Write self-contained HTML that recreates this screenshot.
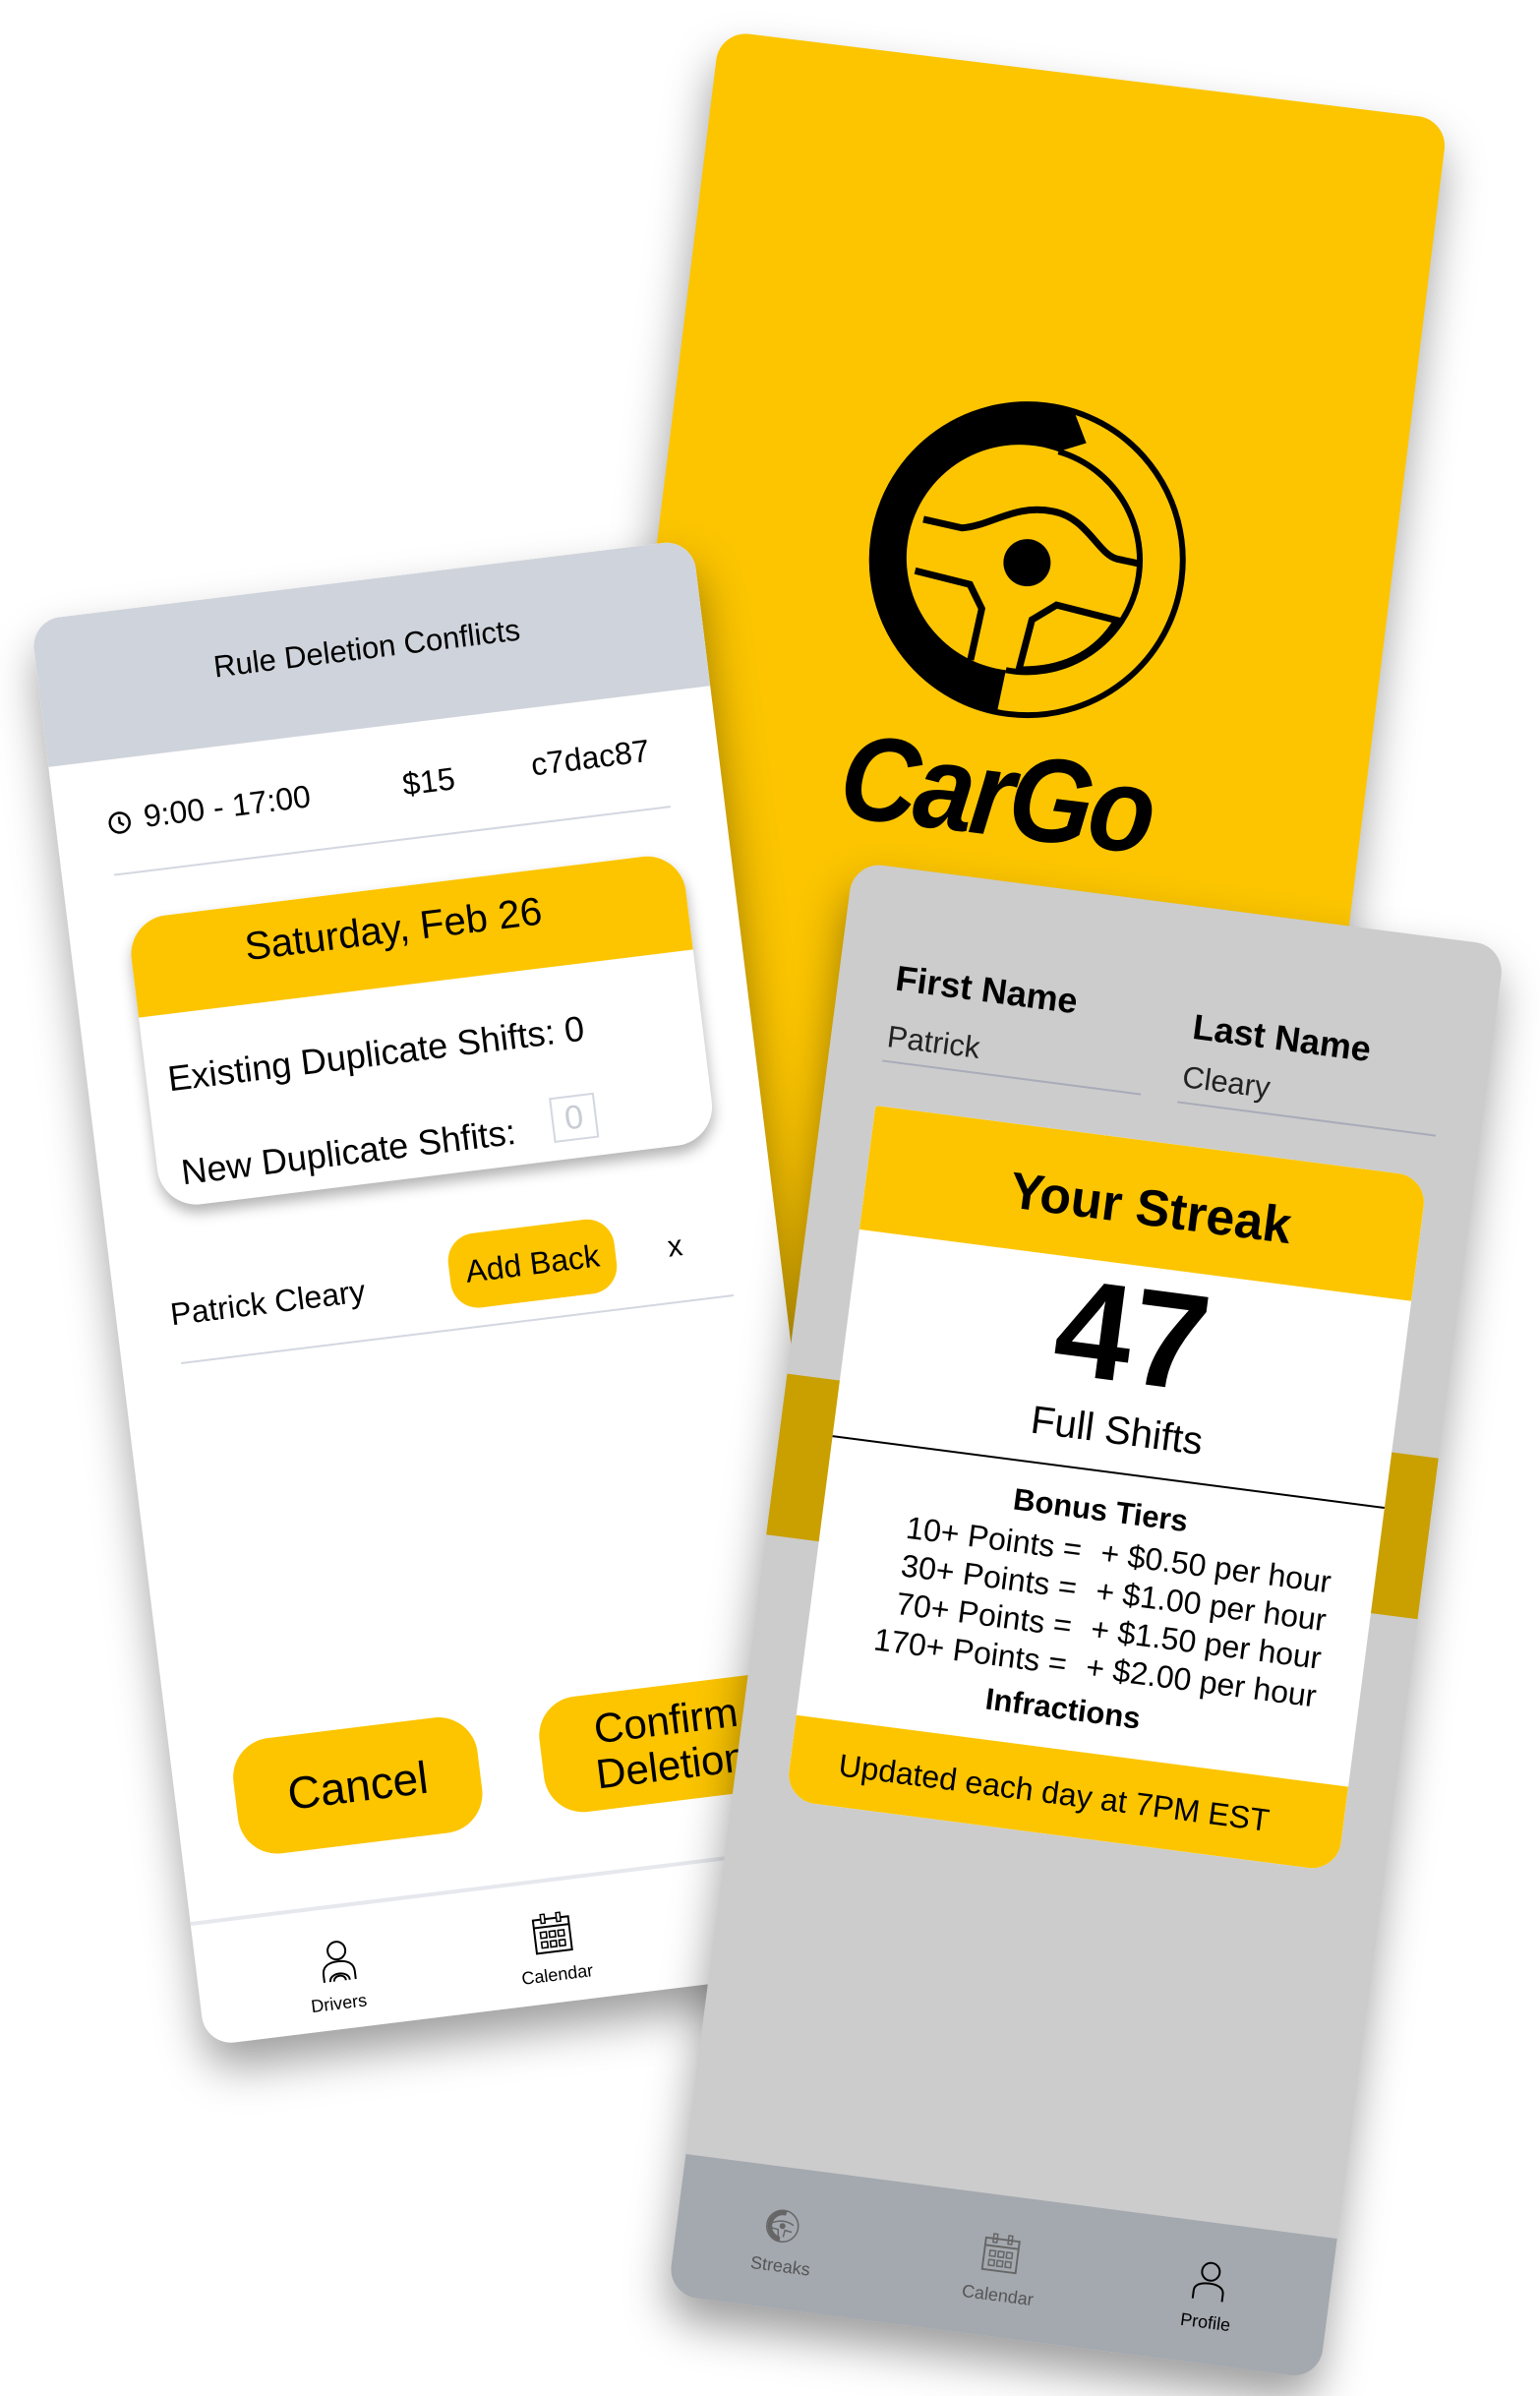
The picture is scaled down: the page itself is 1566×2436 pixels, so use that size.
<!DOCTYPE html>
<html><head><meta charset="utf-8">
<style>
*{margin:0;padding:0;box-sizing:border-box}
body{width:1566px;height:2436px;background:#fff;position:relative;overflow:hidden;font-family:"Liberation Sans",Arial,sans-serif;color:#000}
.card{position:absolute;transform-origin:0 0;overflow:hidden;border-radius:30px;box-shadow:0 25px 45px rgba(0,0,0,.38)}
.a{position:absolute;white-space:nowrap}
.c{transform:translate(-50%,-50%)}
.l{transform:translateY(-50%)}
.btn{position:absolute;background:#fcc500;border-radius:40px;display:flex;align-items:center;justify-content:center;text-align:center;transform:translate(-50%,-50%)}
</style></head><body>

<!-- Yellow splash card -->
<div class="card" style="left:732px;top:31px;width:746px;height:1460px;background:#fcc500;transform:rotate(7deg)">
  <svg class="a" style="left:206px;top:326px" width="340" height="340" viewBox="-170 -170 340 340">
    <circle cx="0" cy="0" r="158" fill="none" stroke="#000" stroke-width="6"/>
    <path d="M 28 -157 A 160 160 0 1 0 -12 160 L -8 114 A 115 115 0 1 1 18 -113 L 45 -125 Z" fill="#000"/>
    <path d="M 18 -113 A 115 115 0 0 1 113 18 A 115 115 0 0 1 -8 114" fill="none" stroke="#000" stroke-width="6"/>
    <path d="M -110 -28 L -70 -24 C -40 -30 -20 -55 20 -52 C 55 -50 70 -15 90 -12 L 112 -10" fill="none" stroke="#000" stroke-width="7"/>
    <path d="M -112 25 L -55 32 L -40 55 L -45 108" fill="none" stroke="#000" stroke-width="7"/>
    <path d="M 5 112 L 12 60 L 35 42 L 98 50 C 80 90 45 108 5 112" fill="none" stroke="#000" stroke-width="7"/>
    <circle cx="0" cy="3" r="24" fill="#000"/>
  </svg>
  <div class="a c" style="left:374px;top:736px;font-size:122px;font-weight:bold;font-style:italic;letter-spacing:-4px"><span style="display:inline-block;transform:scaleX(.9)">CarGo</span></div>
</div>

<!-- Left card -->
<div class="card" style="left:31px;top:631px;width:678px;height:1460px;background:#fff;transform:rotate(-7deg)">
  <div class="a" style="left:0;top:0;width:678px;height:150px;background:#cfd3db"></div>
  <div class="a c" style="left:336px;top:70px;font-size:31px">Rule Deletion Conflicts</div>
  <svg class="a" style="left:52px;top:202px" width="26" height="26" viewBox="0 0 26 26"><circle cx="13" cy="13" r="10" fill="none" stroke="#000" stroke-width="2.5"/><path d="M13 7 V13 L17 16" fill="none" stroke="#000" stroke-width="2.5"/></svg>
  <div class="a l" style="left:90px;top:212px;font-size:32px">9:00 - 17:00</div>
  <div class="a c" style="left:382px;top:212px;font-size:32px">$15</div>
  <div class="a c" style="left:548px;top:208px;font-size:32px">c7dac87</div>
  <div class="a" style="left:53px;top:266px;width:570px;height:2px;background:#d3d7e0"></div>

  <div class="a" style="left:60px;top:314px;width:568px;height:296px;border-radius:40px;background:#fff;box-shadow:0 8px 14px rgba(0,0,0,.3);overflow:hidden">
    <div style="height:100px;background:#fcc500"></div>
  </div>
  <div class="a c" style="left:328px;top:357px;font-size:40px">Saturday, Feb 26</div>
  <div class="a l" style="left:82px;top:480px;font-size:36px">Existing Duplicate Shifts: 0</div>
  <div class="a l" style="left:84px;top:576px;font-size:36px">New Duplicate Shfits:</div>
  <div class="a c" style="left:487px;top:569px;width:46px;height:46px;border:2px solid #d3d7e0;color:#c8ccd4;font-size:34px;text-align:center;line-height:42px">0</div>

  <div class="a c" style="left:155px;top:718px;font-size:32px">Patrick Cleary</div>
  <div class="btn" style="left:427px;top:711px;width:170px;height:76px;font-size:32px;border-radius:28px">Add Back</div>
  <div class="a c" style="left:573px;top:712px;font-size:30px">x</div>
  <div class="a" style="left:60px;top:767px;width:566px;height:2px;background:#d3d7e0"></div>

  <div class="btn" style="left:186px;top:1216px;width:250px;height:118px;font-size:46px">Cancel</div>
  <div class="btn" style="left:505px;top:1212px;width:260px;height:118px;font-size:42px;line-height:1.1">Confirm<br>Deletion</div>

  <div class="a" style="left:0;top:1333px;width:678px;height:4px;background:#e6e8ee"></div>
  <svg class="a" style="left:124px;top:1369px" width="40" height="44" viewBox="0 0 40 44"><circle cx="20" cy="11" r="9" fill="none" stroke="#000" stroke-width="2"/><path d="M4 42 V34 C4 26 10 22 20 22 C30 22 36 26 36 34 V42" fill="none" stroke="#000" stroke-width="2"/><path d="M10 42 C10 32 30 32 30 42 M14 42 C14 35 26 35 26 42" fill="none" stroke="#000" stroke-width="2"/></svg>
  <div class="a c" style="left:140px;top:1434px;font-size:18px">Drivers</div>
  <svg class="a" style="left:344px;top:1368px" width="40" height="42" viewBox="0 0 40 42"><rect x="2" y="6" width="36" height="34" fill="none" stroke="#000" stroke-width="2"/><path d="M2 14 H38" stroke="#000" stroke-width="2"/><rect x="10" y="1" width="4" height="9" fill="#fff" stroke="#000" stroke-width="1.5"/><rect x="26" y="1" width="4" height="9" fill="#fff" stroke="#000" stroke-width="1.5"/><g fill="none" stroke="#000" stroke-width="1.6"><rect x="8" y="19" width="6" height="6"/><rect x="17" y="19" width="6" height="6"/><rect x="26" y="19" width="6" height="6"/><rect x="8" y="29" width="6" height="6"/><rect x="17" y="29" width="6" height="6"/><rect x="26" y="29" width="6" height="6"/></g></svg>
  <div class="a c" style="left:364px;top:1432px;font-size:18px">Calendar</div>
</div>

<!-- Right card -->
<div class="card" style="left:868px;top:876px;width:668px;height:1469px;background:#cccccc;transform:rotate(7.4deg)">
  <div class="a" style="left:0;top:525px;width:668px;height:165px;background:#c9a000"></div>
  <div class="a c" style="left:151px;top:112px;font-size:36px;font-weight:bold">First Name</div>
  <div class="a l" style="left:57px;top:172px;font-size:31px;color:#222">Patrick</div>
  <div class="a" style="left:55px;top:196px;width:265px;height:2px;background:#a8abb8"></div>
  <div class="a c" style="left:455px;top:122px;font-size:36px;font-weight:bold">Last Name</div>
  <div class="a l" style="left:360px;top:174px;font-size:31px;color:#222">Cleary</div>
  <div class="a" style="left:358px;top:199px;width:265px;height:2px;background:#a8abb8"></div>

  <div class="a" style="left:54px;top:243px;width:566px;height:712px;background:#fff;border-radius:4px 30px 30px 30px;overflow:hidden">
    <div style="height:127px;background:#fcc500"></div>
    <div style="position:absolute;left:0;top:338px;width:566px;height:2px;background:#000"></div>
    <div style="position:absolute;left:0;bottom:0;width:566px;height:87px;background:#fcc500"></div>
  </div>
  <div class="a c" style="left:345px;top:311px;font-size:52px;font-weight:bold">Your Streak</div>
  <div class="a c" style="left:343px;top:441px;font-size:140px;font-weight:bold;line-height:1">47</div>
  <div class="a c" style="left:340px;top:540px;font-size:40px">Full Shifts</div>
  <div class="a c" style="left:334px;top:622px;font-size:31px;font-weight:bold">Bonus Tiers</div>
  <div class="a" style="left:40px;top:645px;width:560px;font-size:32px;line-height:39px">
    <div style="display:flex"><span style="width:280px;text-align:right">10+ Points =</span><span style="padding-left:20px">+ $0.50 per hour</span></div>
    <div style="display:flex"><span style="width:280px;text-align:right">30+ Points =</span><span style="padding-left:20px">+ $1.00 per hour</span></div>
    <div style="display:flex"><span style="width:280px;text-align:right">70+ Points =</span><span style="padding-left:20px">+ $1.50 per hour</span></div>
    <div style="display:flex"><span style="width:280px;text-align:right">170+ Points =</span><span style="padding-left:20px">+ $2.00 per hour</span></div>
  </div>
  <div class="a c" style="left:322px;top:827px;font-size:31px;font-weight:bold">Infractions</div>
  <div class="a c" style="left:324px;top:913px;font-size:32px">Updated each day at 7PM EST</div>

  <div class="a" style="left:0;top:1325px;width:668px;height:144px;background:#a4a9af"></div>
  <svg class="a" style="left:89px;top:1367px" width="36" height="36" viewBox="-18 -18 36 36"><circle r="16" fill="none" stroke="#666" stroke-width="1.5"/><path d="M3 -16 A16 16 0 1 0 -1 16 L -1 11 A11 11 0 1 1 2 -11 Z" fill="#666"/><path d="M-11 -2 C-4 -6 4 -6 11 -2 M-11 3 L-4 4 L-3 11 M2 11 L3 4 L10 5" fill="none" stroke="#666" stroke-width="1.5"/><circle r="3" fill="#666"/></svg>
  <div class="a c" style="left:110px;top:1426px;font-size:18px;color:#555">Streaks</div>
  <svg class="a" style="left:312px;top:1364px" width="38" height="40" viewBox="0 0 40 42"><rect x="2" y="6" width="36" height="34" fill="none" stroke="#666" stroke-width="2"/><path d="M2 14 H38" stroke="#666" stroke-width="2"/><g fill="none" stroke="#666" stroke-width="1.6"><rect x="10" y="1" width="4" height="9"/><rect x="26" y="1" width="4" height="9"/><rect x="8" y="19" width="6" height="6"/><rect x="17" y="19" width="6" height="6"/><rect x="26" y="19" width="6" height="6"/><rect x="8" y="29" width="6" height="6"/><rect x="17" y="29" width="6" height="6"/><rect x="26" y="29" width="6" height="6"/></g></svg>
  <div class="a c" style="left:333px;top:1427px;font-size:18px;color:#555">Calendar</div>
  <svg class="a" style="left:528px;top:1364px" width="34" height="42" viewBox="0 0 34 42"><circle cx="17" cy="11" r="9" fill="none" stroke="#000" stroke-width="2"/><path d="M2 40 V32 C2 26 8 23 17 23 C26 23 32 26 32 32 V40" fill="none" stroke="#000" stroke-width="2"/></svg>
  <div class="a c" style="left:546px;top:1427px;font-size:18px">Profile</div>
</div>
</body></html>
